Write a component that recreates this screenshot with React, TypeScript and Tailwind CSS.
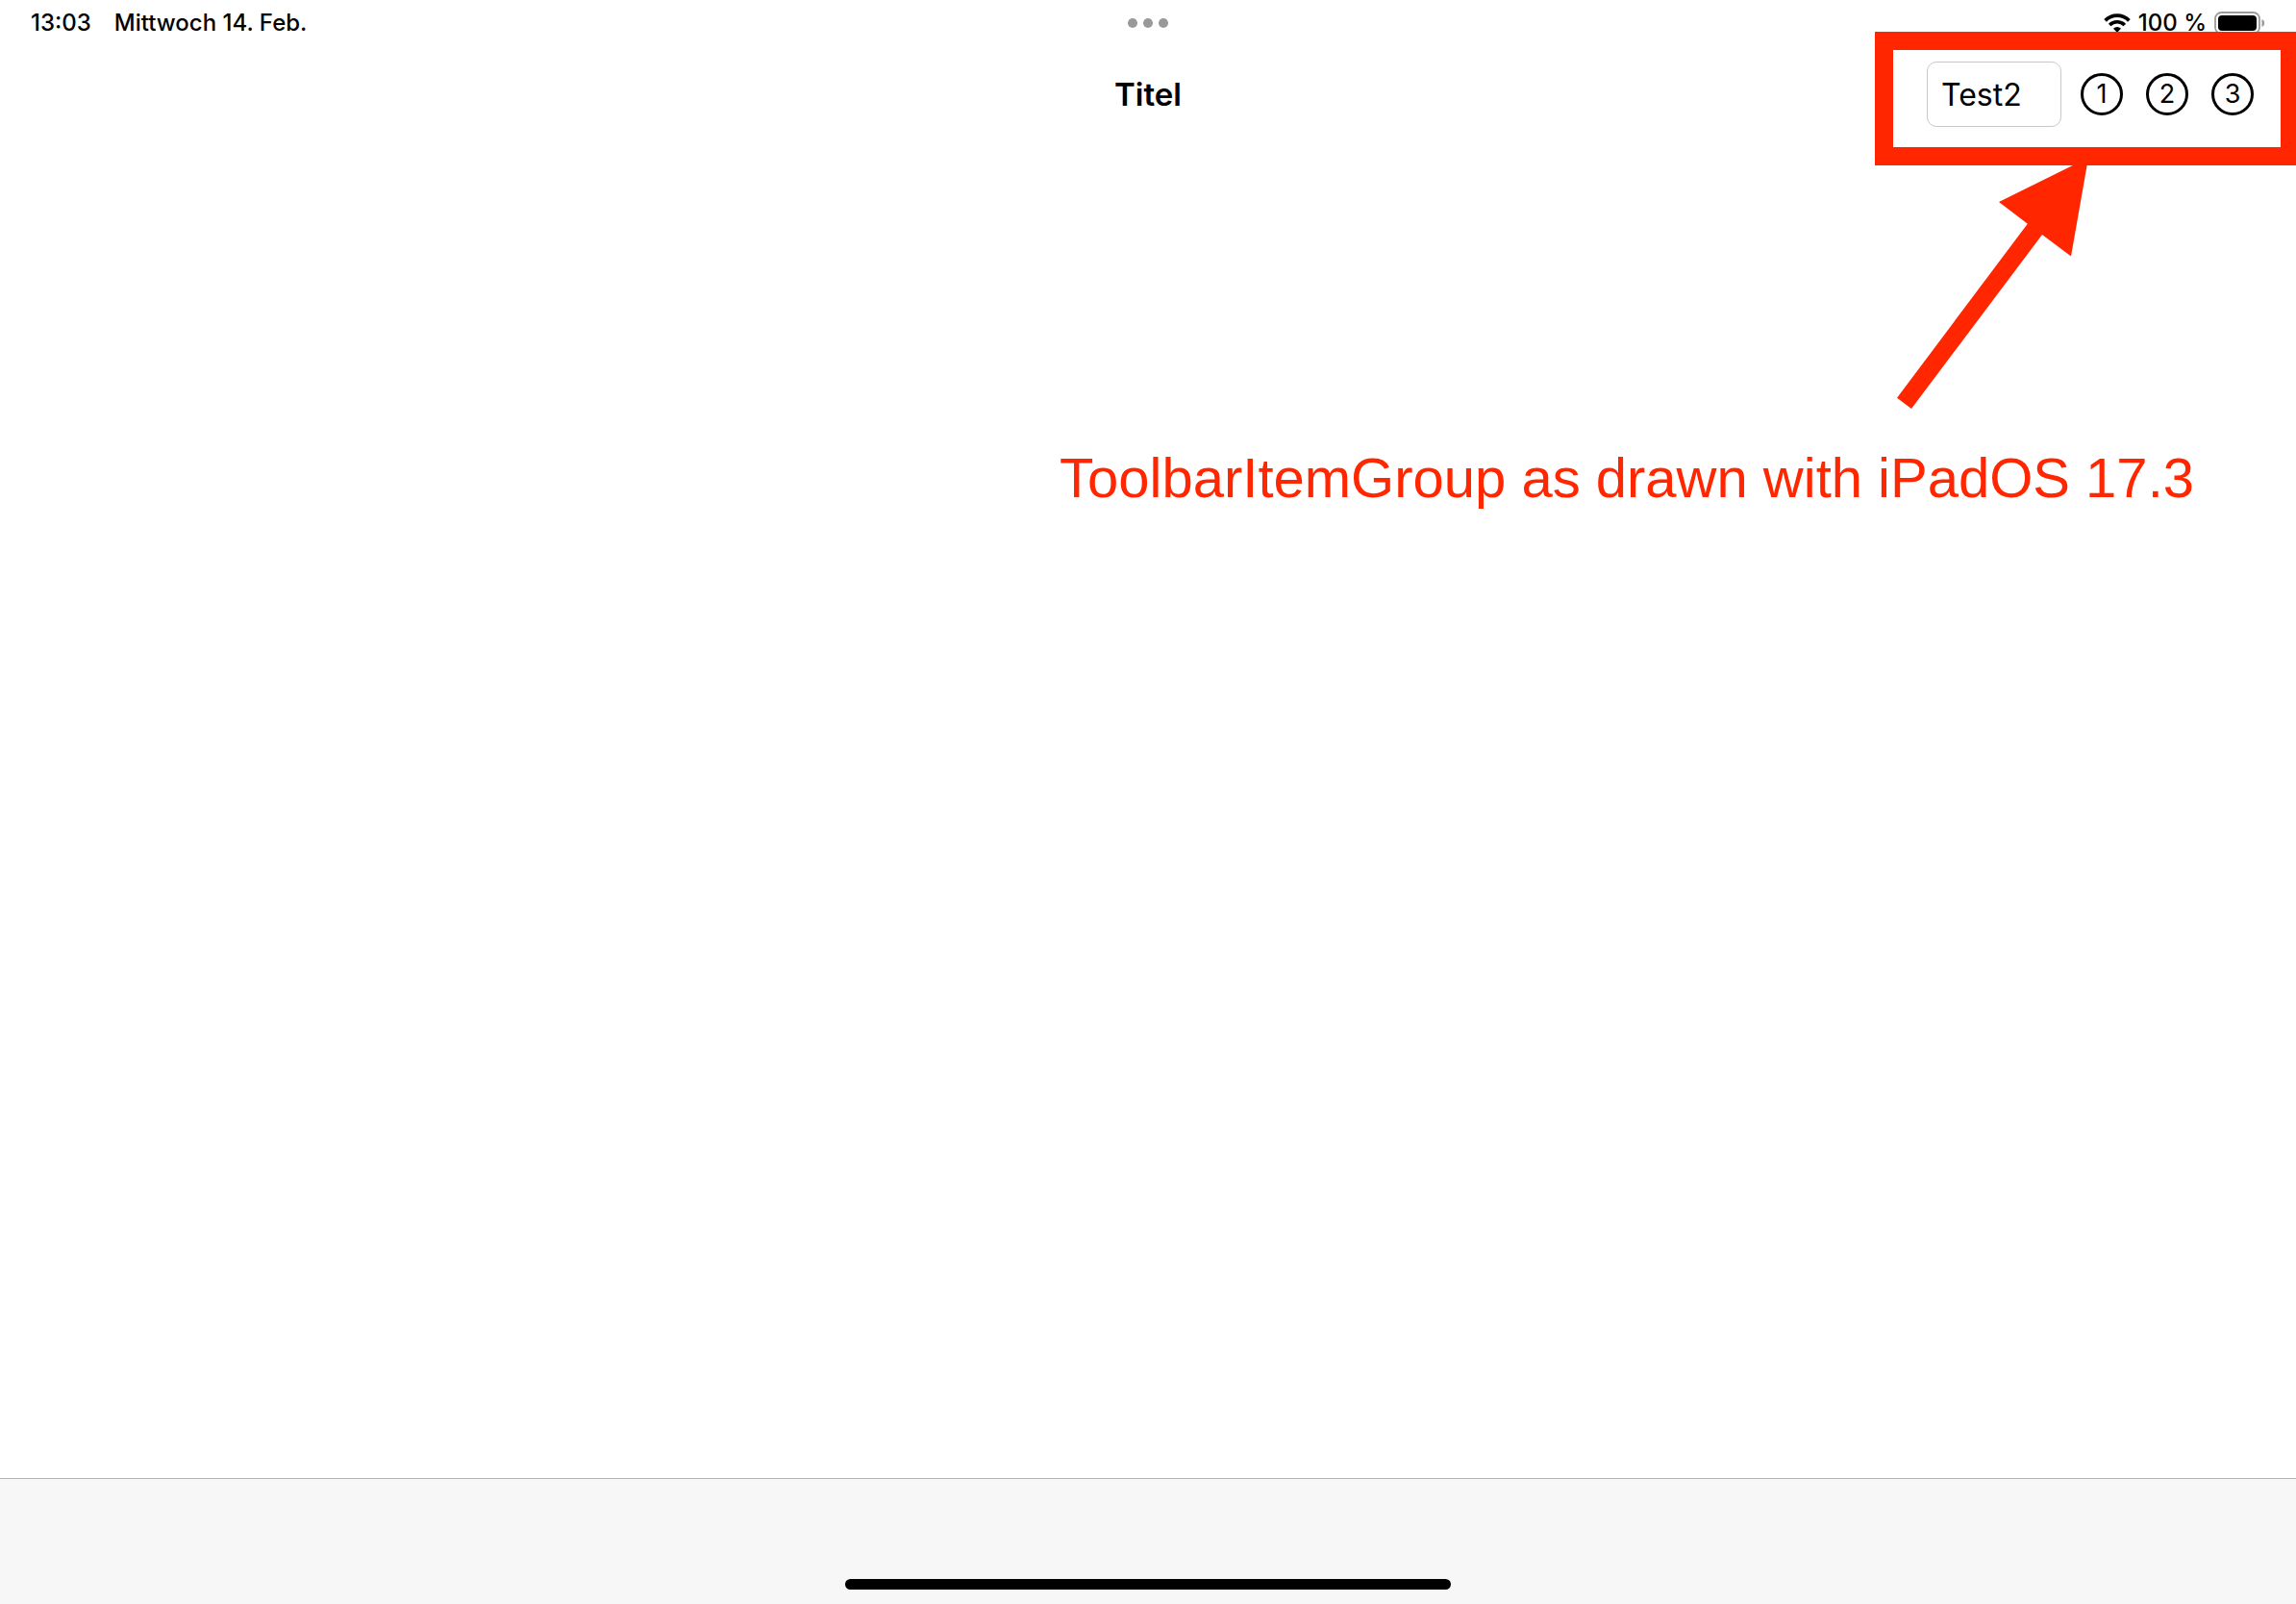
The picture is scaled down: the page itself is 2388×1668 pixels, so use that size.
import { useState } from 'react';

const actions = [1, 2, 3];

function WifiIcon() {
  return (
    <svg viewBox="0 0 28 20" className="w-7 h-5" aria-hidden="true">
      <path d="M1.6 7.3a17.6 17.6 0 0 1 24.8 0" fill="none" stroke="black" strokeWidth="3.8" />
      <path d="M6.2 12a11 11 0 0 1 15.6 0" fill="none" stroke="black" strokeWidth="3.6" />
      <path d="M14 19.8l-4-4.1a5.8 5.8 0 0 1 8 0z" fill="black" />
    </svg>
  );
}

function BatteryIcon() {
  return (
    <svg viewBox="0 0 53 24" className="w-[53px] h-6" aria-hidden="true">
      <rect x="1" y="1" width="46" height="22" rx="6.5" fill="none" stroke="#9b9b9b" strokeWidth="1.8" />
      <rect x="4" y="4" width="40" height="16" rx="4" fill="black" />
      <path d="M49.5 8c1.8.7 2.7 2.2 2.7 4s-.9 3.3-2.7 4z" fill="#9b9b9b" />
    </svg>
  );
}

function StatusBar() {
  return (
    <div className="grid grid-cols-3 items-center h-12 px-8 text-[24px] leading-8 font-medium">
      <div className="flex gap-6">
        <span>13:03</span>
        <span>Mittwoch 14. Feb.</span>
      </div>
      <div className="flex justify-center gap-1.5">
        <span className="size-2.5 rounded-full bg-[#999999]" />
        <span className="size-2.5 rounded-full bg-[#999999]" />
        <span className="size-2.5 rounded-full bg-[#999999]" />
      </div>
      <div className="flex items-center justify-end">
        <WifiIcon />
        <span className="ml-2 mr-2">100 %</span>
        <BatteryIcon />
      </div>
    </div>
  );
}

function NavBar() {
  const [text, setText] = useState('Test2');

  return (
    <header className="grid grid-cols-3 items-center h-[100px] px-11">
      <h1 className="col-start-2 text-center text-[33px] leading-10 font-semibold">Titel</h1>
      <div className="flex items-center justify-end gap-6">
        <input
          type="text"
          aria-label="Test"
          value={text}
          onChange={(e) => setText(e.target.value)}
          className="w-[140px] h-[68px] -mr-1 px-3.5 border border-[#c8c8c8] rounded-[10px] text-[32px] leading-10 bg-white"
        />
        {actions.map((n) => (
          <button
            key={n}
            type="button"
            className="flex items-center justify-center size-11 rounded-full border-3 border-black text-[27px] leading-8"
          >
            {n}
          </button>
        ))}
      </div>
    </header>
  );
}

// Red frame around the toolbar items and the arrow pointing at it
function Highlight() {
  return (
    <>
      <div className="absolute right-0 top-[33px] w-[438px] h-[139px] border-[19px] border-r-[16px] border-[#ff2600] pointer-events-none" />
      <svg
        viewBox="0 0 208 270"
        className="absolute right-[208px] top-40 w-[208px] h-[270px] pointer-events-none"
        aria-hidden="true"
      >
        <path d="M1 253.7L136.8 72.7L107 50L200 4L182 106.5L152 84L16 265z" fill="#ff2600" />
      </svg>
    </>
  );
}

export default function App() {
  return (
    <div className="relative flex flex-col min-h-screen bg-white text-black font-['Inter',sans-serif]">
      <StatusBar />
      <NavBar />
      <Highlight />

      <main className="flex-1 pt-[316px] pr-[106px]">
        <p className="text-right text-[58px] leading-[66px] text-[#ff2600] font-['Liberation_Sans',sans-serif]">
          ToolbarItemGroup as drawn with iPadOS 17.3
        </p>
      </main>

      <footer className="flex items-end justify-center h-[131px] pb-[15px] border-t border-[#b2b2b2] bg-[#f7f7f7]">
        <div className="w-[630px] h-[11px] rounded-full bg-black" />
      </footer>
    </div>
  );
}
